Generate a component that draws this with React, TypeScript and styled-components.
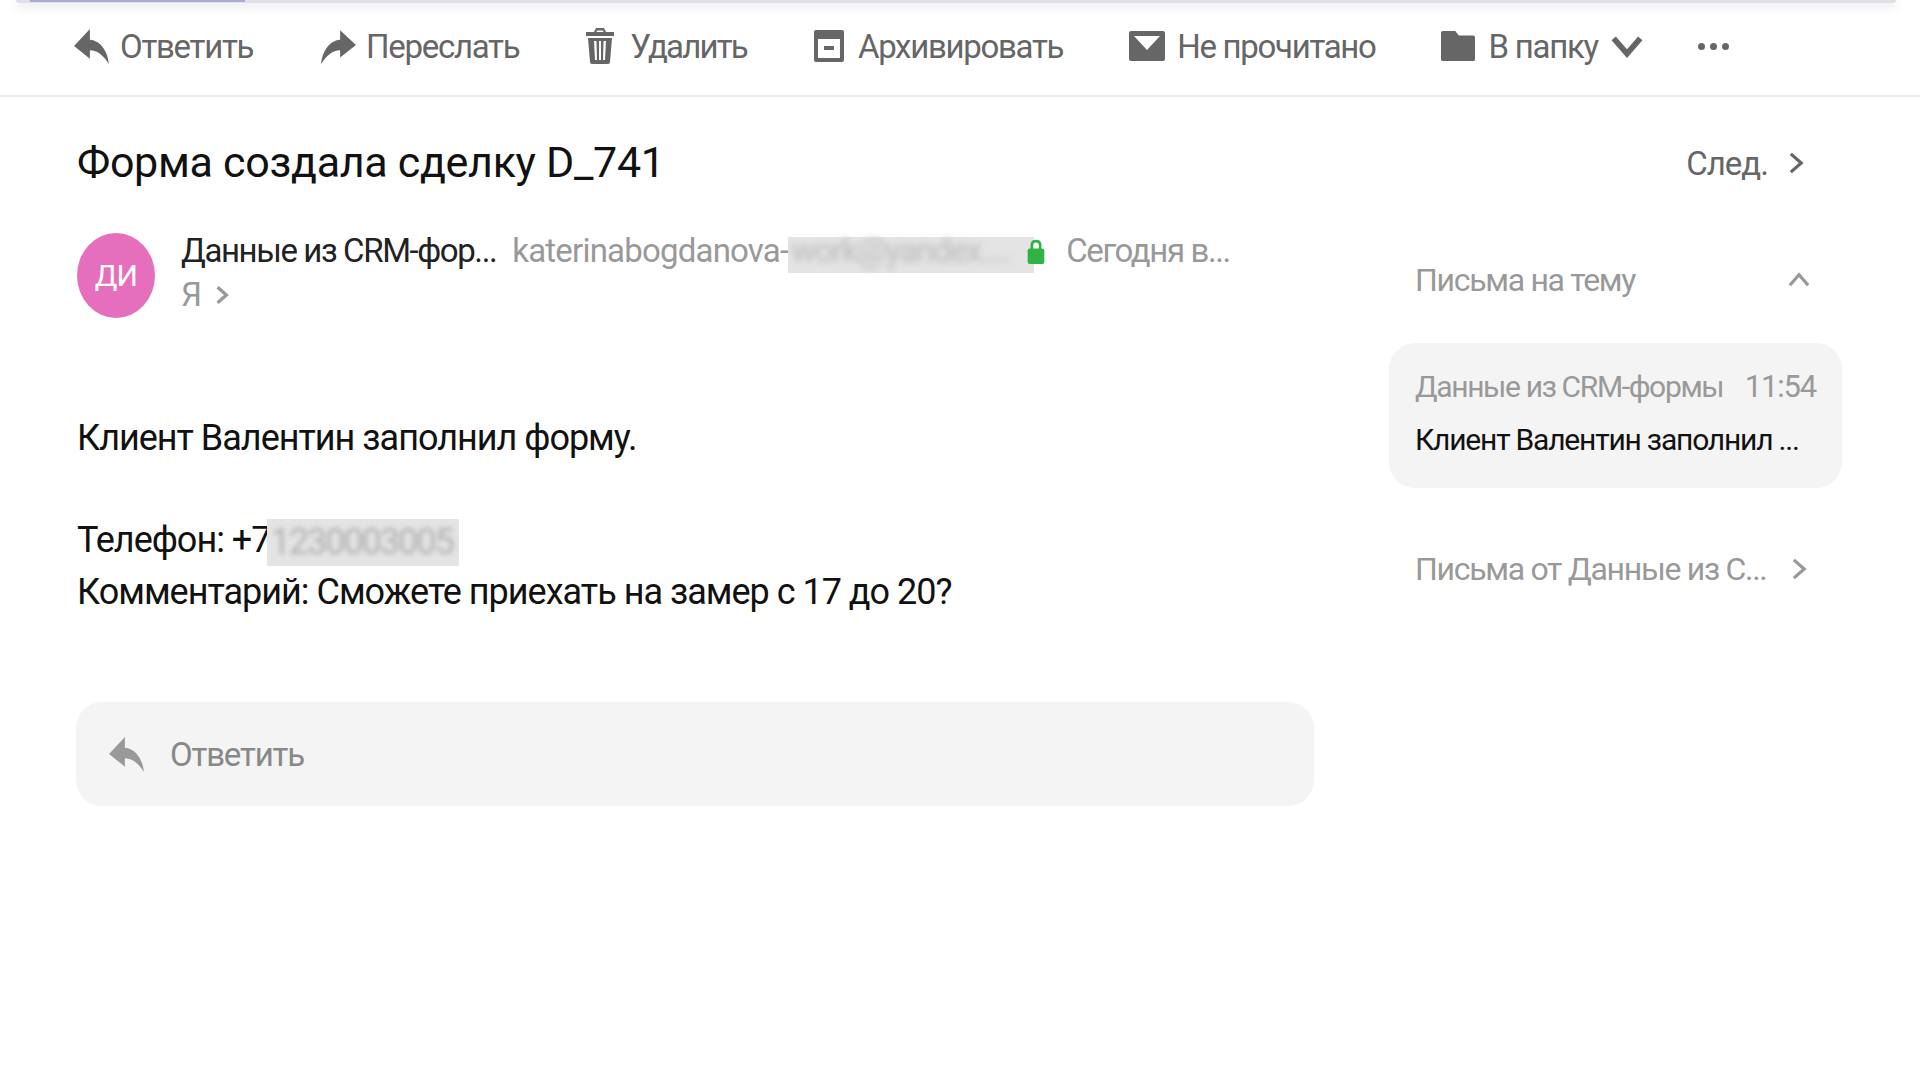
import styled, { createGlobalStyle } from 'styled-components';

const GlobalStyle = createGlobalStyle`
  html, body {
    margin: 0;
    padding: 0;
    background: #ffffff;
  }
  body {
    font-family: 'Roboto', 'Noto Sans', 'Liberation Sans', sans-serif;
    overflow: hidden;
  }
`;

const ReplyIcon = ({ color = '#666666', size = 38 }: { color?: string; size?: number }) => (
  <svg width={size} height={size} viewBox="0 0 36 36">
    <path
      fill={color}
      d="M16 2 L1 18 L16 30 V22 C23 22 29 27 34 35 C33 24 27 13 16 12 Z"
    />
  </svg>
);

const ForwardIcon = () => (
  <svg width="38" height="38" viewBox="0 0 36 36">
    <path
      fill="#666666"
      d="M20 3 L35 17 L20 29 V22 C13 22 7 27 2 35 C3 24 9 13 20 12 Z"
    />
  </svg>
);

const TrashIcon = () => (
  <svg width="30" height="38" viewBox="0 0 30 38">
    <path
      fill="#666666"
      fillRule="evenodd"
      d="M11 1 H19 L21 5 H29 V9 H1 V5 H9 Z M12 3.5 L11.5 5 H18.5 L18 3.5 Z M3 11 H27 L25 35 Q25 37 23 37 H7 Q5 37 5 35 Z M9 14 L10 33 H12 L11.5 14 Z M14 14 V33 H16 V14 Z M18.5 14 L18 33 H20 L21 14 Z"
    />
  </svg>
);

const ArchiveIcon = () => (
  <svg width="32" height="36" viewBox="0 0 32 36">
    <path
      fill="#666666"
      fillRule="evenodd"
      d="M3 2 H29 Q31 2 31 4 V32 Q31 34 29 34 H3 Q1 34 1 32 V4 Q1 2 3 2 Z M5 11 V30 H27 V11 Z M11 18 H21 V22 H11 Z"
    />
  </svg>
);

const MailIcon = () => (
  <svg width="36" height="30" viewBox="0 0 36 30">
    <path
      fill="#666666"
      fillRule="evenodd"
      d="M2 0 H34 Q36 0 36 2 V28 Q36 30 34 30 H2 Q0 30 0 28 V2 Q0 0 2 0 Z M5 5 L18 19 L31 5 Z"
    />
  </svg>
);

const FolderIcon = () => (
  <svg width="34" height="32" viewBox="0 0 36 32">
    <path
      fill="#666666"
      d="M2 0 H15 L19 5 H34 Q36 5 36 7 V30 Q36 32 34 32 H2 Q0 32 0 30 V2 Q0 0 2 0 Z"
    />
  </svg>
);

const Chevron = ({ dir, color, size = 20, width = 2.5 }: { dir: 'up' | 'down' | 'right'; color: string; size?: number; width?: number }) => {
  const points = {
    up: '3,14 10,6 17,14',
    down: '3,6 10,14 17,6',
    right: '6,3 14,10 6,17',
  }[dir];
  return (
    <svg width={size} height={size} viewBox="0 0 20 20">
      <polyline points={points} fill="none" stroke={color} strokeWidth={width} />
    </svg>
  );
};

const LockIcon = () => (
  <svg width="20" height="25" viewBox="0 0 18 24">
    <path fill="none" stroke="#2fb344" strokeWidth="2.5" d="M5 11 V6 Q5 2 9 2 Q13 2 13 6 V11" />
    <rect x="1" y="9" width="16" height="15" rx="2" fill="#2fb344" />
  </svg>
);

const Page = styled.div`
  width: 1920px;
  height: 1086px;
  background: #ffffff;
  position: relative;
`;

const TopShade = styled.div`
  height: 3px;
  margin: 0 24px 0 16px;
  background: #dfe1e8;
  box-shadow: 0 3px 8px rgba(90, 100, 130, 0.25);
  border-radius: 0 0 6px 6px;
`;

const ShadeAccent = styled.div`
  width: 215px;
  height: 2px;
  margin-left: 14px;
  background: #a9a9d6;
`;

const Toolbar = styled.div`
  height: 94px;
  box-sizing: border-box;
  display: flex;
  align-items: center;
  padding: 0 0 6px 73px;
  border-bottom: 2px solid #ececec;
`;

const ToolButton = styled.div<{ $gap?: number; $after?: number; $spacing?: number }>`
  display: flex;
  align-items: center;
  gap: ${p => p.$gap ?? 9}px;
  margin-right: ${p => p.$after ?? 66}px;
  font-size: 33px;
  color: #666666;
  white-space: nowrap;
  letter-spacing: ${p => p.$spacing ?? -1.3}px;
`;

const DownArrow = styled.span`
  display: flex;
  margin-left: -4px;
`;

const Dots = styled.div`
  display: flex;
  gap: 5px;
  span {
    width: 7px;
    height: 7px;
    border-radius: 50%;
    background: #666666;
  }
`;

const Content = styled.div`
  display: flex;
`;

const MailColumn = styled.div`
  width: 1314px;
  box-sizing: border-box;
  padding: 37px 0 0 77px;
`;

const Subject = styled.h1`
  margin: 0;
  font-size: 43px;
  line-height: 56px;
  font-weight: 400;
  color: #111111;
  letter-spacing: -0.3px;
`;

const SenderRow = styled.div`
  display: flex;
  gap: 26px;
  margin-top: 43px;
`;

const Avatar = styled.div`
  width: 78px;
  height: 85px;
  border-radius: 50%;
  background: #e66fbd;
  color: #ffffff;
  font-size: 30px;
  letter-spacing: -0.8px;
  display: flex;
  align-items: center;
  justify-content: center;
`;

const SenderInfo = styled.div`
  display: flex;
  flex-direction: column;
  gap: 4px;
  margin-top: -2px;
  font-size: 33px;
  line-height: 40px;
  letter-spacing: -1.4px;
`;

const SenderLine = styled.div`
  display: flex;
  align-items: center;
  height: 40px;
  white-space: nowrap;
  color: #999999;
`;

const SenderName = styled.span`
  color: #222222;
  margin-right: 16px;
`;

const SenderEmail = styled.span`
  letter-spacing: -0.8px;
`;

const Masked = styled.span<{ $width: number; $height: number; $top?: number; $left?: number }>`
  display: inline-block;
  width: ${p => p.$width}px;
  height: ${p => p.$height}px;
  margin-top: ${p => p.$top ?? 0}px;
  margin-left: ${p => p.$left ?? 0}px;
  line-height: ${p => p.$height - (p.$top ?? 0)}px;
  background: #e4e4e4;
  vertical-align: middle;
  white-space: nowrap;
`;

const MaskedText = styled.span<{ $color: string; $blur: number; $spacing: number }>`
  display: block;
  color: ${p => p.$color};
  filter: blur(${p => p.$blur}px);
  letter-spacing: ${p => p.$spacing}px;
  padding-left: 3px;
`;

const LockSlot = styled.span`
  display: flex;
  margin: 0 20px 0 -8px;
  position: relative;
`;

const Recipient = styled.div`
  display: flex;
  align-items: center;
  gap: 10px;
  color: #999999;
`;

const Body = styled.div`
  margin-top: 94px;
  font-size: 36px;
  line-height: 52px;
  letter-spacing: -1px;
  color: #111111;
`;

const BodyGap = styled.div`
  height: 50px;
`;

const ReplyBox = styled.div`
  margin-top: 84px;
  width: 1238px;
  margin-left: -1px;
  height: 104px;
  border-radius: 26px;
  background: #f4f4f4;
  display: flex;
  align-items: center;
  gap: 24px;
  padding-left: 32px;
  box-sizing: border-box;
  font-size: 33px;
  letter-spacing: -1.2px;
  color: #888888;
`;

const Side = styled.aside`
  width: 453px;
  margin-left: 75px;
  padding-top: 38px;
`;

const NextLink = styled.div`
  height: 56px;
  display: flex;
  align-items: center;
  justify-content: flex-end;
  gap: 15px;
  padding-right: 33px;
  font-size: 33px;
  letter-spacing: -1px;
  color: #666666;
`;

const SideRow = styled.div<{ $top?: number }>`
  display: flex;
  align-items: center;
  justify-content: space-between;
  margin-top: ${p => p.$top ?? 0}px;
  padding: 0 30px 0 26px;
  font-size: 32px;
  letter-spacing: -1.3px;
  color: #999999;
  white-space: nowrap;
`;

const ThreadCard = styled.div`
  margin: 44px 0 62px;
  height: 145px;
  box-sizing: border-box;
  padding: 24px 26px;
  border-radius: 26px;
  background: #f4f4f4;
`;

const CardHead = styled.div`
  display: flex;
  justify-content: space-between;
  font-size: 31px;
  line-height: 40px;
  letter-spacing: -1.2px;
  color: #999999;
  white-space: nowrap;
`;

const CardFrom = styled.span`
  font-size: 30px;
  letter-spacing: -1.35px;
`;

const CardText = styled.div`
  margin-top: 13px;
  font-size: 30px;
  line-height: 40px;
  letter-spacing: -1.2px;
  color: #111111;
  white-space: nowrap;
`;

export default function App() {
  return (
    <Page>
      <GlobalStyle />
      <TopShade>
        <ShadeAccent />
      </TopShade>
      <Toolbar>
        <ToolButton>
          <ReplyIcon />
          Ответить
        </ToolButton>
        <ToolButton>
          <ForwardIcon />
          Переслать
        </ToolButton>
        <ToolButton $gap={15} $spacing={-1.8}>
          <TrashIcon />
          Удалить
        </ToolButton>
        <ToolButton $gap={13}>
          <ArchiveIcon />
          Архивировать
        </ToolButton>
        <ToolButton $gap={12} $after={65}>
          <MailIcon />
          Не прочитано
        </ToolButton>
        <ToolButton $gap={14} $after={52}>
          <FolderIcon />
          В папку
          <DownArrow>
            <Chevron dir="down" color="#666666" size={38} width={3} />
          </DownArrow>
        </ToolButton>
        <Dots>
          <span />
          <span />
          <span />
        </Dots>
      </Toolbar>
      <Content>
        <MailColumn>
          <Subject>Форма создала сделку D_741</Subject>
          <SenderRow>
            <Avatar>ДИ</Avatar>
            <SenderInfo>
              <SenderLine>
                <SenderName>Данные из CRM-фор...</SenderName>
                <SenderEmail>katerinabogdanova-</SenderEmail>
                <Masked $width={246} $height={36} $top={8}>
                  <MaskedText $color="#bbbbbb" $blur={3} $spacing={-1.4}>work@yandex....</MaskedText>
                </Masked>
                <LockSlot>
                  <LockIcon />
                </LockSlot>
                Сегодня в...
              </SenderLine>
              <Recipient>
                Я
                <Chevron dir="right" color="#999999" size={22} width={3} />
              </Recipient>
            </SenderInfo>
          </SenderRow>
          <Body>
            Клиент Валентин заполнил форму.
            <BodyGap />
            Телефон: +7
            <Masked $width={192} $height={47} $left={-3}>
              <MaskedText $color="#b0b0b0" $blur={2.5} $spacing={-2}>1230003005</MaskedText>
            </Masked>
            <br />
            Комментарий: Сможете приехать на замер с 17 до 20?
          </Body>
          <ReplyBox>
            <ReplyIcon color="#999999" />
            Ответить
          </ReplyBox>
        </MailColumn>
        <Side>
          <NextLink>
            След.
            <Chevron dir="right" color="#666666" size={26} width={2.5} />
          </NextLink>
          <SideRow $top={70}>
            Письма на тему
            <Chevron dir="up" color="#999999" size={26} width={2.5} />
          </SideRow>
          <ThreadCard>
            <CardHead>
              <CardFrom>Данные из CRM-формы</CardFrom>
              <span>11:54</span>
            </CardHead>
            <CardText>Клиент Валентин заполнил ...</CardText>
          </ThreadCard>
          <SideRow>
            Письма от Данные из С...
            <Chevron dir="right" color="#999999" size={26} width={2.5} />
          </SideRow>
        </Side>
      </Content>
    </Page>
  );
}
